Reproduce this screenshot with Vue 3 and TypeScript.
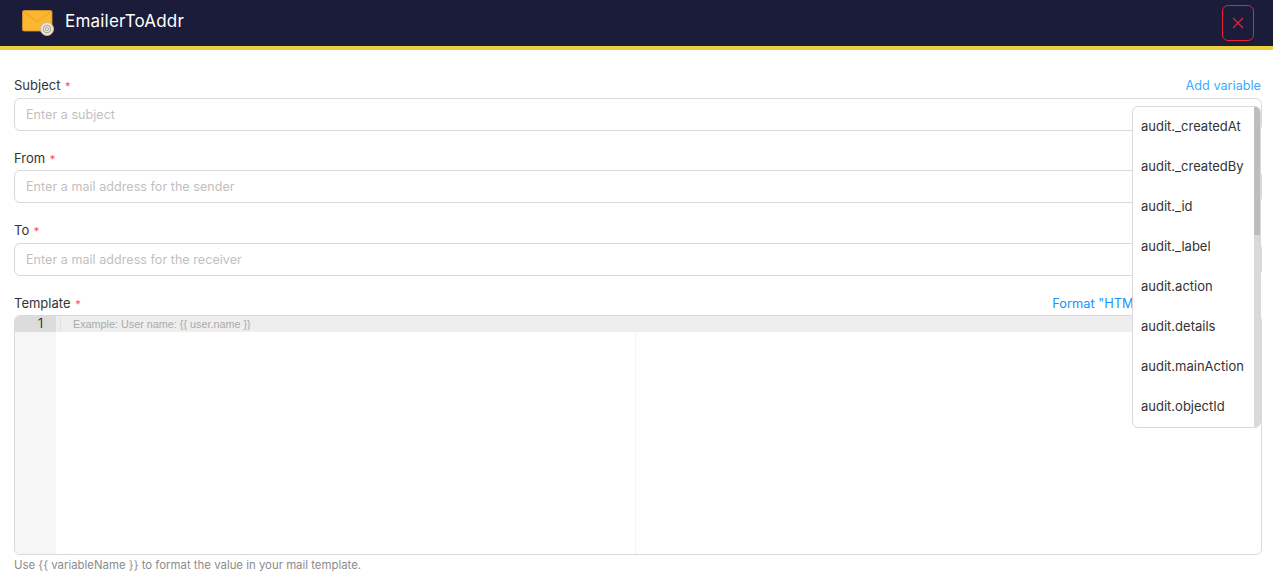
<script setup lang="ts">
interface Field { label: string; placeholder: string; link?: string }
const fields: Field[] = [
  { label: 'Subject', placeholder: 'Enter a subject', link: 'Add variable' },
  { label: 'From', placeholder: 'Enter a mail address for the sender' },
  { label: 'To', placeholder: 'Enter a mail address for the receiver' },
]
const variables: string[] = [
  'audit._createdAt', 'audit._createdBy', 'audit._id', 'audit._label',
  'audit.action', 'audit.details', 'audit.mainAction', 'audit.objectId',
]
</script>

<template>
  <div class="page">
    <header class="topbar">
      <div class="brand">
        <svg class="logo" width="32" height="28" viewBox="0 0 32 28">
          <rect x="0.500" y="1.500" width="29.500" height="20.500" rx="1.500" fill="#fbb62f" stroke="#d9982a" stroke-width="0.800" />
          <path d="M1 2.500 L15 12.500 L29.500 2.500" fill="none" stroke="#e6a126" stroke-width="1" />
          <circle cx="25" cy="20" r="6.500" fill="#efe8da" stroke="#c9b998" stroke-width="1" />
          <circle cx="25" cy="20" r="3.800" fill="none" stroke="#9a9388" stroke-width="0.900" />
          <circle cx="25" cy="20" r="1.600" fill="none" stroke="#9a9388" stroke-width="0.800" />
        </svg>
        <span class="title">EmailerToAddr</span>
      </div>
      <button class="close" type="button" aria-label="Close">
        <svg width="12" height="12" viewBox="0 0 12 12">
          <path d="M1 1 L11 11 M11 1 L1 11" stroke="#e8213a" stroke-width="1.200" fill="none" />
        </svg>
      </button>
    </header>

    <main class="form">
      <div v-for="f in fields" :key="f.label" class="field">
        <div class="label-row">
          <label class="label">{{ f.label }} <span class="req">*</span></label>
          <a v-if="f.link" class="link top-link">{{ f.link }}</a>
        </div>
        <div class="input">{{ f.placeholder }}</div>
      </div>

      <div class="field template">
        <div class="label-row">
          <label class="label">Template <span class="req">*</span></label>
          <div class="links">
            <a class="link strong">Format "HTML"</a>
            <a class="link">Add variable</a>
          </div>
        </div>
        <div class="editor">
          <div class="gutter">
            <div class="gutter-active">1</div>
          </div>
          <div class="code">
            <div class="active-line"><span class="sep"></span><span class="hint">Example: User name: &#123;&#123; user.name &#125;&#125;</span></div>
            <div class="code-body"><span class="margin"></span></div>
          </div>
        </div>
        <p class="help">Use &#123;&#123; variableName &#125;&#125; to format the value in your mail template.</p>
      </div>

      <div class="dropdown">
        <ul class="menu">
          <li v-for="v in variables" :key="v" class="item">{{ v }}</li>
        </ul>
        <div class="scrollbar"><div class="thumb"></div></div>
      </div>
    </main>
  </div>
</template>

<style>
html, body { margin: 0; background: #fff; overflow: hidden; }
</style>

<style scoped>
.page {
  width: 1273px;
  height: 579px;
  overflow: hidden;
  font-family: Inter, "Open Sans", "Liberation Sans", sans-serif;
  font-size: 12.500px;
  color: #333;
}
.topbar {
  box-sizing: border-box;
  height: 50px;
  background: #1a1c3a;
  border-bottom: 4px solid #ebd13e;
  display: flex;
  align-items: center;
  justify-content: space-between;
  padding: 0 19px 0 22px;
}
.brand { display: flex; align-items: center; gap: 11px; }
.logo { display: block; }
.title { color: #fff; font-size: 17px; letter-spacing: 0.200px; margin-top: -4px; }
.close {
  width: 32px;
  height: 36px;
  padding: 0;
  margin-top: -1px;
  display: flex;
  align-items: center;
  justify-content: center;
  background: transparent;
  border: 1px solid #e8213a;
  border-radius: 6px;
}
.form {
  position: relative;
  box-sizing: border-box;
  padding: 27px 11px 0 14px;
}
.field { margin-bottom: 18.750px; }
.label-row {
  display: flex;
  justify-content: space-between;
  align-items: center;
  height: 18px;
  margin-bottom: 2.750px;
  line-height: 17px;
}
.label { color: #333; font-size: 13px; }
.req { color: #ff4d4f; margin-left: 1px; font-size: 11px; }
.link { color: #40a9ff; font-size: 12.700px; margin-right: 1px; }
.top-link { margin-bottom: 2px; }
.links { display: flex; gap: 39px; }
.strong { color: #1890ff; font-size: 12.800px; }
.input {
  box-sizing: border-box;
  height: 33px;
  line-height: 31px;
  border: 1px solid #d9d9d9;
  border-radius: 6px;
  padding: 0 11px;
  color: #bfbfbf;
  letter-spacing: 0.060px;
}
.template { margin-bottom: 0; }
.editor {
  box-sizing: border-box;
  height: 240px;
  border: 1px solid #d9d9d9;
  border-radius: 6px;
  display: flex;
  overflow: hidden;
}
.gutter { width: 41px; background: #f6f6f6; flex: none; }
.gutter-active {
  height: 16px;
  line-height: 16px;
  background: #dcdcdc;
  text-align: right;
  padding-right: 13px;
  color: #333;
}
.code { flex: 1; display: flex; flex-direction: column; }
.active-line {
  height: 16px;
  background: #eee;
  display: flex;
  align-items: center;
  font-family: "Liberation Sans", Arial, sans-serif;
  font-size: 10.800px;
}
.sep { width: 1px; height: 16px; background: #e0e0e0; margin-left: 4px; }
.hint { color: #aaa; margin-left: 12px; }
.code-body { flex: 1; display: flex; padding-left: 579px; }
.margin { width: 1px; background: #f3f3f3; }
.help {
  margin: 2.750px 0 0;
  font-size: 11.400px;
  line-height: 15px;
  color: #8c8c8c;
}
.dropdown {
  position: absolute;
  top: 56px;
  left: 1132px;
  box-sizing: border-box;
  width: 129px;
  height: 322px;
  background: #fff;
  border: 1px solid #d9d9d9;
  border-radius: 6px;
  overflow: hidden;
  display: flex;
}
.menu { list-style: none; margin: 0; padding: 0; flex: 1; }
.item {
  height: 40px;
  line-height: 39px;
  padding-left: 8px;
  font-size: 13px;
  color: #333;
  white-space: nowrap;
}
.scrollbar { width: 6px; background: #d9d9d9; flex: none; }
.thumb { height: 128px; background: #bdbdbd; }
</style>
